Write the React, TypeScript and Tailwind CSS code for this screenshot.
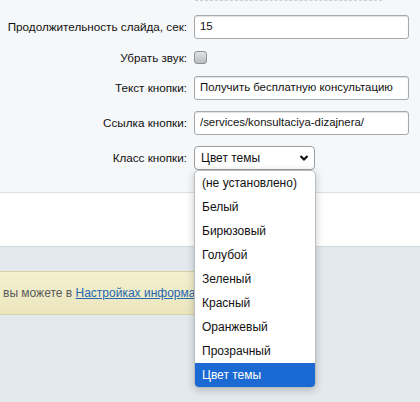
import React from "react";

const options = [
	"(не установлено)",
	"Белый",
	"Бирюзовый",
	"Голубой",
	"Зеленый",
	"Красный",
	"Оранжевый",
	"Прозрачный",
	"Цвет темы",
];

const TextRow = ({ label, value }: { label: string; value: string }) => (
	<div className="flex items-start">
		<div className="w-[187px] shrink-0 whitespace-nowrap pt-[4px] text-right text-[11.7px] leading-[15px] text-[#111]">{label}</div>
		<div className="ml-[7px] flex h-[24px] w-[215px] items-center whitespace-nowrap rounded-[3px] border border-[#a3a9ad] bg-white pl-[5px] text-[11.4px] text-[#111] shadow-[inset_0_1px_1px_rgba(0,0,0,0.12)]">
			{value}
		</div>
	</div>
);

const App = () => {
	return (
		<div className="relative h-[402px] w-[420px] overflow-hidden bg-[#e3e9ec] font-['Liberation_Sans',Arial,sans-serif]">
			{/* form area */}
			<div className="h-[193px] border-b border-[#dbe1e4] bg-[#f5f7f8]">
				<div className="ml-[195px] h-[1px] w-[187px] border-b border-dashed border-[#c9cfd3]" />
				<div className="flex flex-col gap-[11px] pt-[14px]">
					<TextRow label="Продолжительность слайда, сек:" value="15" />
					<div className="flex items-center">
						<div className="w-[187px] shrink-0 text-right text-[11.7px] leading-[15px] text-[#111]">Убрать звук:</div>
						<div className="ml-[7px] h-[13px] w-[13px] rounded-[3px] border border-[#8e9296] bg-gradient-to-b from-[#e4e4e4] to-[#b9bcbf]" />
					</div>
					<TextRow label="Текст кнопки:" value="Получить бесплатную консультацию" />
					<TextRow label="Ссылка кнопки:" value="/services/konsultaciya-dizajnera/" />
					<div className="flex items-start">
						<div className="w-[187px] shrink-0 pt-[4px] text-right text-[11.7px] leading-[15px] text-[#111]">Класс кнопки:</div>
						<div className="ml-[7px] flex h-[24px] w-[121px] items-center justify-between rounded-[4px] border border-[#9a9fa3] bg-white pl-[6px] pr-[5px] text-[12px] text-[#111]">
							<span>Цвет темы</span>
							<svg width="10" height="8" viewBox="0 0 10 8">
								<path d="M1.5 2 L5 5.5 L8.5 2" fill="none" stroke="#111" strokeWidth="2.2" />
							</svg>
						</div>
					</div>
				</div>
			</div>

			{/* white panel */}
			<div className="h-[54px] border-b border-[#d3dadd] bg-white" />

			{/* notice */}
			<div className="mt-[24px] flex h-[44px] w-[196px] items-center overflow-hidden whitespace-nowrap border-t border-b border-[#d9d4a6] bg-gradient-to-b from-[#f3f0d0] to-[#ebe6bd] pl-[3px] text-[12px] text-[#5a5a5a]">
				вы можете в&nbsp;
				<a className="text-[#2467b3] underline">Настройках информац</a>
			</div>

			{/* open select list */}
			<div className="absolute left-[194px] top-[170px] w-[122px] overflow-hidden rounded-[5px] border border-[#b9bec2] bg-white shadow-[0_2px_8px_rgba(0,0,0,0.22)]">
				{options.map((o, i) => (
					<div
						key={o}
						className={
							i === options.length - 1
								? "flex h-[24px] items-center bg-[#1b69d3] pl-[7px] text-[12px] text-white"
								: "flex h-[24px] items-center pl-[7px] text-[12px] text-[#111]"
						}
					>
						{o}
					</div>
				))}
			</div>
		</div>
	);
};

export default App;
